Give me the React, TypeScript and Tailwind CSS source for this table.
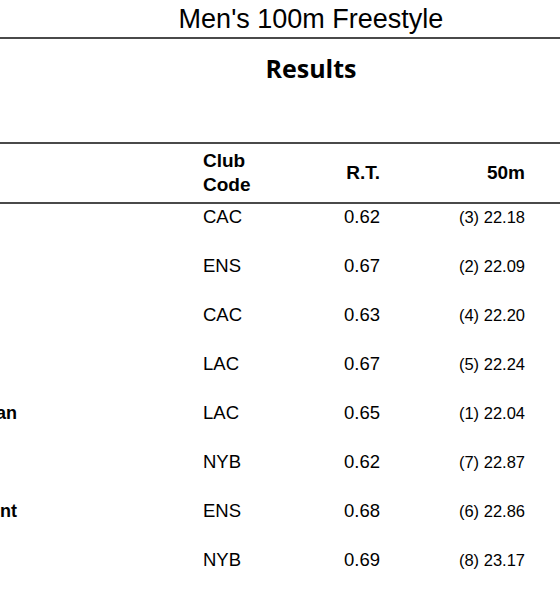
const rows = [
  { name: "", club: "CAC", rt: "0.62", split: "(3) 22.18" },
  { name: "", club: "ENS", rt: "0.67", split: "(2) 22.09" },
  { name: "", club: "CAC", rt: "0.63", split: "(4) 22.20" },
  { name: "", club: "LAC", rt: "0.67", split: "(5) 22.24" },
  { name: "Jordan", club: "LAC", rt: "0.65", split: "(1) 22.04" },
  { name: "", club: "NYB", rt: "0.62", split: "(7) 22.87" },
  { name: "Vincent", club: "ENS", rt: "0.68", split: "(6) 22.86" },
  { name: "", club: "NYB", rt: "0.69", split: "(8) 23.17" },
];

export default function App() {
  return (
    <div className="h-[600px] w-[560px] overflow-hidden bg-white font-['Liberation_Sans',Arial,sans-serif] text-black">
      {/* Event title */}
      <div className="h-[37px] pt-[3px] pl-[62px] text-center text-[27px] leading-[32px]">
        Men's 100m Freestyle
      </div>
      <div className="h-[2px] bg-[#4a4a4a]" />

      {/* Section heading */}
      <div className="h-[103px] pt-[14px] pl-[62px] text-center font-['Open_Sans',sans-serif] text-[25px] font-bold leading-[30px]">
        Results
      </div>

      {/* Table header */}
      <div className="grid h-[62px] grid-cols-[191px_106px_95px_135px_33px] items-center border-y-2 border-[#4a4a4a] text-[19px] font-bold">
        <div />
        <div className="pl-[12px] leading-[24px]">
          Club
          <br />
          Code
        </div>
        <div className="pr-[12px] text-right leading-[24px]">R.T.</div>
        <div className="pr-[2px] text-right leading-[24px]">50m</div>
        <div />
      </div>

      {/* Rows */}
      {rows.map((r, i) => (
        <div
          key={i}
          className="grid h-[49px] grid-cols-[191px_106px_95px_135px_33px] items-baseline leading-[26px]"
        >
          <div className="flex w-[17px] justify-end whitespace-nowrap text-[18px] font-bold">
            {r.name}
          </div>
          <div className="pl-[12px] text-[18.5px]">{r.club}</div>
          <div className="pr-[12px] text-right text-[18.5px]">{r.rt}</div>
          <div className="pr-[2px] text-right text-[16.5px]">{r.split}</div>
          <div />
        </div>
      ))}
    </div>
  );
}
